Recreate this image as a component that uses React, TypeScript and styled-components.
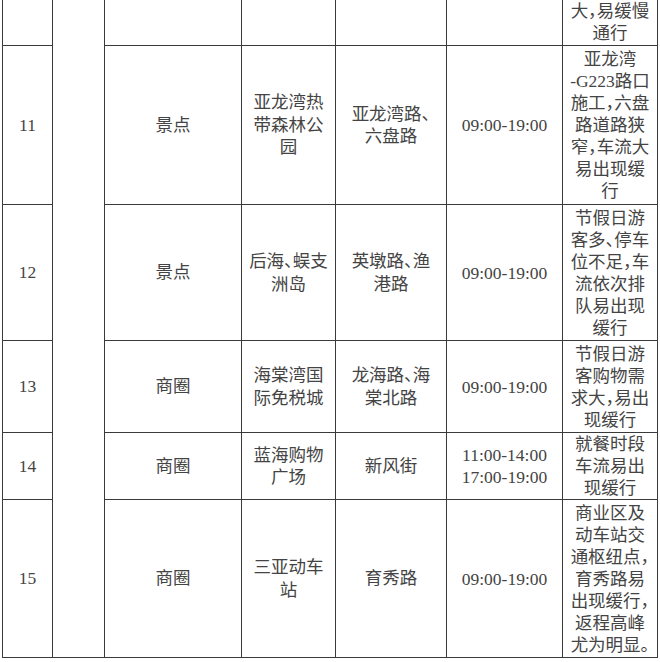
import styled, {createGlobalStyle} from "styled-components";

const GlobalStyle = createGlobalStyle`
  html, body {
    margin: 0;
    padding: 0;
    background: #ffffff;
  }
`;

type Row = {
  no: string
  type: string
  place: string[]
  road: string[]
  time: string[]
  desc: string[]
  height: number
  partial?: boolean
}

const rows: Row[] = [
  {no: '', type: '', place: [], road: [], time: [], desc: ['大，易缓慢', '通行'], height: 45, partial: true},
  {
    no: '11', type: '景点', place: ['亚龙湾热', '带森林公', '园'], road: ['亚龙湾路、', '六盘路'], time: ['09:00-19:00'],
    desc: ['亚龙湾', '-G223路口', '施工，六盘', '路道路狭', '窄，车流大', '易出现缓', '行'], height: 159
  },
  {
    no: '12', type: '景点', place: ['后海、蜈支', '洲岛'], road: ['英墩路、渔', '港路'], time: ['09:00-19:00'],
    desc: ['节假日游', '客多、停车', '位不足，车', '流依次排', '队易出现', '缓行'], height: 136
  },
  {
    no: '13', type: '商圈', place: ['海棠湾国', '际免税城'], road: ['龙海路、海', '棠北路'], time: ['09:00-19:00'],
    desc: ['节假日游', '客购物需', '求大，易出', '现缓行'], height: 92
  },
  {
    no: '14', type: '商圈', place: ['蓝海购物', '广场'], road: ['新风街'], time: ['11:00-14:00', '17:00-19:00'],
    desc: ['就餐时段', '车流易出', '现缓行'], height: 67
  },
  {
    no: '15', type: '商圈', place: ['三亚动车', '站'], road: ['育秀路'], time: ['09:00-19:00'],
    desc: ['商业区及', '动车站交', '通枢纽点，', '育秀路易', '出现缓行，', '返程高峰', '尤为明显。'], height: 158
  },
];

const colWidths = [50, 52, 137, 94, 111, 116, 95]

const Lines = ({items}: { items: string[] }) => (
  <>
    {items.map((t, i) => <Line key={i}>{t}</Line>)}
  </>
)

export default function App() {
  return (
    <>
      <GlobalStyle/>
      <Page>
        <Table>
          <colgroup>
            {colWidths.map((w, i) => <col key={i} style={{width: w}}/>)}
          </colgroup>
          <tbody>
          {rows.map((row, i) => (
            <Tr key={i} $h={row.height}>
              <Cell $bottom={row.partial} $open={row.partial}>{row.no}</Cell>
              {i === 0 && <Cell rowSpan={rows.length} $open/>}
              <Cell $open={row.partial}>{row.type}</Cell>
              <Cell $open={row.partial}><Lines items={row.place}/></Cell>
              <Cell $open={row.partial}><Lines items={row.road}/></Cell>
              <TimeCell $open={row.partial}><Lines items={row.time}/></TimeCell>
              <DescCell $bottom={row.partial} $open={row.partial}><Lines items={row.desc}/></DescCell>
            </Tr>
          ))}
          </tbody>
        </Table>
      </Page>
    </>
  );
}

const Page = styled.div`
  padding-left: 2px;
  width: 658px;
  height: 662px;
  overflow: hidden;
  box-sizing: border-box;
`;

const Table = styled.table`
  width: 656px;
  table-layout: fixed;
  border-collapse: collapse;
  font-family: "Liberation Serif", "Noto Sans CJK SC", serif;
  font-size: 17.5px;
  font-feature-settings: "halt";
  color: #444444;
`;

const Tr = styled.tr<{ $h: number }>`
  height: ${p => p.$h}px;
`;

const Cell = styled.td<{ $bottom?: boolean, $open?: boolean }>`
  border: 1px solid #3a3a3a;
  border-top: ${p => p.$open ? 'none' : '1px solid #3a3a3a'};
  padding: 0;
  text-align: center;
  vertical-align: ${p => p.$bottom ? 'bottom' : 'middle'};
  line-height: 22.5px;
  white-space: nowrap;
`;

const TimeCell = styled(Cell)`
  line-height: 22px;
`;

const DescCell = styled(Cell)`
  line-height: 22px;
  padding-bottom: ${p => p.$bottom ? '1px' : '0'};
`;

const Line = styled.span`
  display: block;
`;
